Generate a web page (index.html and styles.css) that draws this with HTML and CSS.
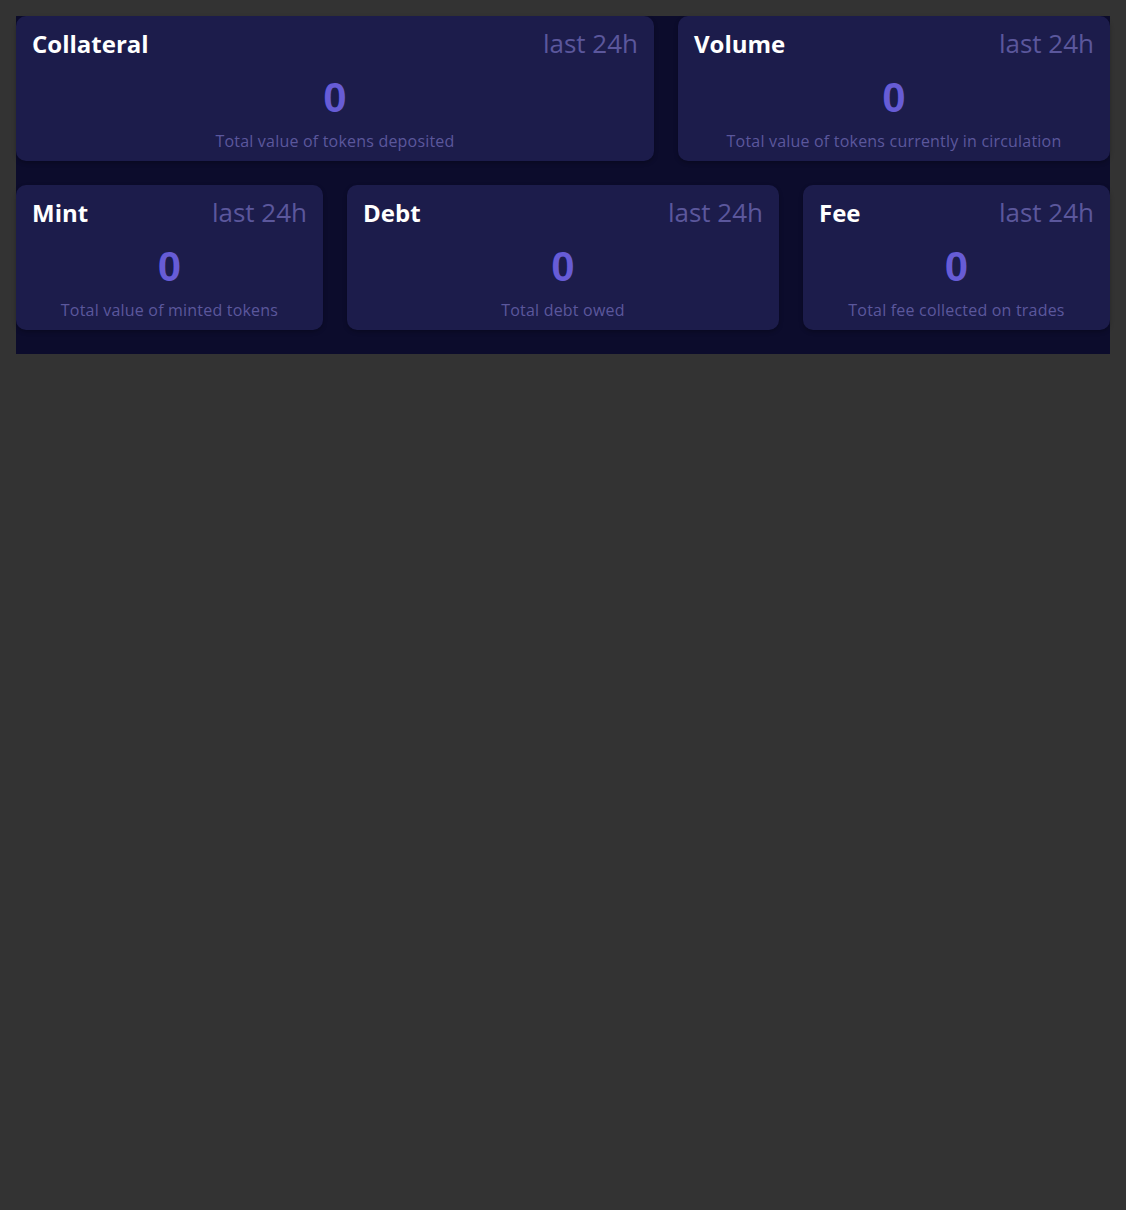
FILE: index.html
```html
<!DOCTYPE html>
<html lang="en">
<head>
  <meta charset="UTF-8" />
  <meta name="viewport" content="width=device-width, initial-scale=1.0" />
  <title>Stats</title>
  <link rel="stylesheet" href="styles.css">
</head>
<body>
  <main class="stats">
    <div class="stats-row row-two">
      <section class="stat-card">
        <div class="stat-head">
          <h2>Collateral</h2>
          <span class="period">last 24h</span>
        </div>
        <div class="stat-value">0</div>
        <p class="stat-desc">Total value of tokens deposited</p>
      </section>
      <section class="stat-card">
        <div class="stat-head">
          <h2>Volume</h2>
          <span class="period">last 24h</span>
        </div>
        <div class="stat-value">0</div>
        <p class="stat-desc">Total value of tokens currently in circulation</p>
      </section>
    </div>

    <div class="stats-row row-three">
      <section class="stat-card">
        <div class="stat-head">
          <h2>Mint</h2>
          <span class="period">last 24h</span>
        </div>
        <div class="stat-value">0</div>
        <p class="stat-desc">Total value of minted tokens</p>
      </section>
      <section class="stat-card">
        <div class="stat-head">
          <h2>Debt</h2>
          <span class="period">last 24h</span>
        </div>
        <div class="stat-value">0</div>
        <p class="stat-desc">Total debt owed</p>
      </section>
      <section class="stat-card">
        <div class="stat-head">
          <h2>Fee</h2>
          <span class="period">last 24h</span>
        </div>
        <div class="stat-value">0</div>
        <p class="stat-desc">Total fee collected on trades</p>
      </section>
    </div>
  </main>
</body>
</html>
```

FILE: styles.css
```css
* {
  box-sizing: border-box;
  margin: 0;
  padding: 0;
}

body {
  background: #333333;
  font-family: 'Open Sans', sans-serif;
  padding: 16px;
}

.stats {
  background: #0c0c2c;
  padding-bottom: 24px;
  display: flex;
  flex-direction: column;
  gap: 24px;
}

.stats-row {
  display: grid;
  gap: 24px;
}

.row-two {
  grid-template-columns: 638fr 432fr;
}

.row-three {
  grid-template-columns: 307fr 432fr 307fr;
}

.stat-card {
  background: #1c1c4b;
  border-radius: 10px;
  box-shadow: 0 2px 4px rgba(0, 0, 0, 0.25);
  height: 145px;
  padding: 10px 16px 0;
  display: flex;
  flex-direction: column;
  align-items: center;
}

.stat-head {
  width: 100%;
  height: 34px;
  display: flex;
  justify-content: space-between;
  align-items: baseline;
}

.stat-head h2 {
  color: #ffffff;
  font-size: 24px;
  font-weight: 700;
  line-height: 34px;
}

.period {
  color: #5b579c;
  font-size: 26px;
  font-weight: 400;
  line-height: 34px;
}

.stat-value {
  color: #675cd6;
  font-family: 'Liberation Sans', Arial, sans-serif;
  font-size: 42px;
  font-weight: 700;
  line-height: 1;
  margin-top: 17px;
}

.stat-desc {
  color: #5b579c;
  font-size: 16px;
  letter-spacing: 0.2px;
  line-height: 22px;
  margin-top: 11px;
}
```
